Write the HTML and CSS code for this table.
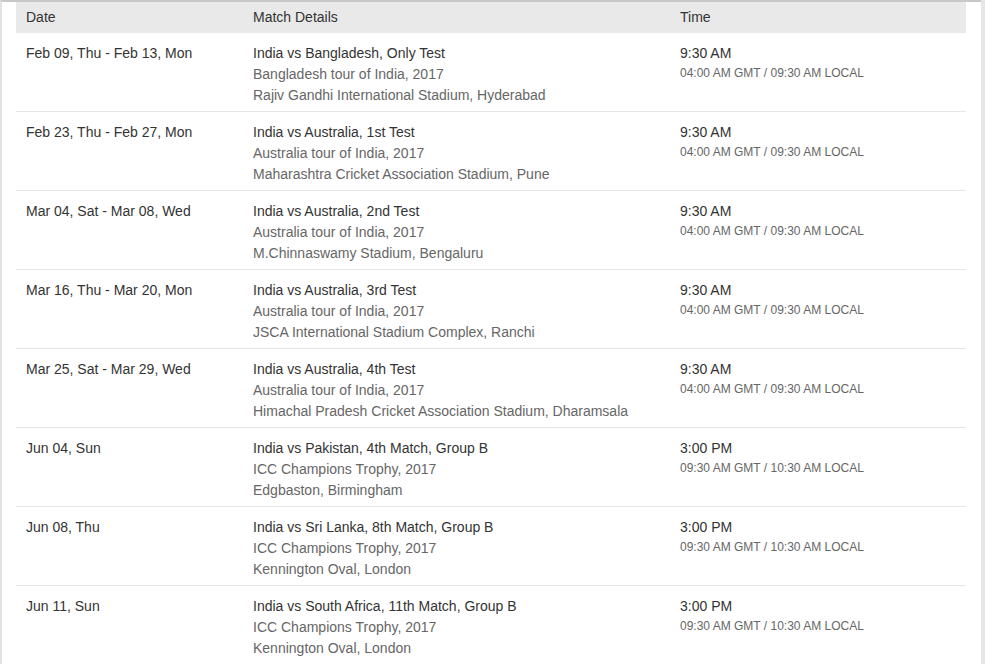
FILE: index.html
```html
<!DOCTYPE html>
<html>
<head>
<meta charset="utf-8">
<title>Fixtures</title>
<link rel="stylesheet" href="styles.css">
</head>
<body>
<div class="page">
  <div class="panel">
    <table class="fixtures">
      <thead>
        <tr><th class="c-date">Date</th><th class="c-match">Match Details</th><th class="c-time">Time</th></tr>
      </thead>
      <tbody>
        <tr>
          <td>Feb 09, Thu - Feb 13, Mon</td>
          <td><p class="title">India vs Bangladesh, Only Test</p><p class="sub">Bangladesh tour of India, 2017</p><p class="sub">Rajiv Gandhi International Stadium, Hyderabad</p></td>
          <td><p class="title">9:30 AM</p><p class="zone">04:00 AM GMT / 09:30 AM LOCAL</p></td>
        </tr>
        <tr>
          <td>Feb 23, Thu - Feb 27, Mon</td>
          <td><p class="title">India vs Australia, 1st Test</p><p class="sub">Australia tour of India, 2017</p><p class="sub">Maharashtra Cricket Association Stadium, Pune</p></td>
          <td><p class="title">9:30 AM</p><p class="zone">04:00 AM GMT / 09:30 AM LOCAL</p></td>
        </tr>
        <tr>
          <td>Mar 04, Sat - Mar 08, Wed</td>
          <td><p class="title">India vs Australia, 2nd Test</p><p class="sub">Australia tour of India, 2017</p><p class="sub">M.Chinnaswamy Stadium, Bengaluru</p></td>
          <td><p class="title">9:30 AM</p><p class="zone">04:00 AM GMT / 09:30 AM LOCAL</p></td>
        </tr>
        <tr>
          <td>Mar 16, Thu - Mar 20, Mon</td>
          <td><p class="title">India vs Australia, 3rd Test</p><p class="sub">Australia tour of India, 2017</p><p class="sub">JSCA International Stadium Complex, Ranchi</p></td>
          <td><p class="title">9:30 AM</p><p class="zone">04:00 AM GMT / 09:30 AM LOCAL</p></td>
        </tr>
        <tr>
          <td>Mar 25, Sat - Mar 29, Wed</td>
          <td><p class="title">India vs Australia, 4th Test</p><p class="sub">Australia tour of India, 2017</p><p class="sub">Himachal Pradesh Cricket Association Stadium, Dharamsala</p></td>
          <td><p class="title">9:30 AM</p><p class="zone">04:00 AM GMT / 09:30 AM LOCAL</p></td>
        </tr>
        <tr>
          <td>Jun 04, Sun</td>
          <td><p class="title">India vs Pakistan, 4th Match, Group B</p><p class="sub">ICC Champions Trophy, 2017</p><p class="sub">Edgbaston, Birmingham</p></td>
          <td><p class="title">3:00 PM</p><p class="zone">09:30 AM GMT / 10:30 AM LOCAL</p></td>
        </tr>
        <tr>
          <td>Jun 08, Thu</td>
          <td><p class="title">India vs Sri Lanka, 8th Match, Group B</p><p class="sub">ICC Champions Trophy, 2017</p><p class="sub">Kennington Oval, London</p></td>
          <td><p class="title">3:00 PM</p><p class="zone">09:30 AM GMT / 10:30 AM LOCAL</p></td>
        </tr>
        <tr>
          <td>Jun 11, Sun</td>
          <td><p class="title">India vs South Africa, 11th Match, Group B</p><p class="sub">ICC Champions Trophy, 2017</p><p class="sub">Kennington Oval, London</p></td>
          <td><p class="title">3:00 PM</p><p class="zone">09:30 AM GMT / 10:30 AM LOCAL</p></td>
        </tr>
      </tbody>
    </table>
  </div>
  <div class="rail"></div>
</div>
</body>
</html>
```

FILE: styles.css
```css
*{margin:0;padding:0;box-sizing:border-box;}
html,body{height:100%;overflow:hidden;}
body{background:#fff;font-family:"Liberation Sans",Arial,sans-serif;font-size:14px;color:#333;}
.page{display:flex;height:100%;}
.panel{flex:1;border-left:2px solid #e2e2e2;border-top:2px solid #c8c8c8;padding:0 15px 0 14px;}
.rail{width:4px;background:#e6e6e6;}
.fixtures{width:950px;border-collapse:collapse;table-layout:fixed;}
.fixtures th{background:#e9e9e9;font-weight:normal;text-align:left;height:31px;padding:0 10px 1px;color:#333;line-height:30px;}
.c-date{width:227px;}
.c-match{width:427px;}
.c-time{width:296px;}
.fixtures td{vertical-align:top;padding:10px 10px 5px;line-height:21px;height:79px;border-bottom:1px solid #e6e6e6;}
.fixtures tbody tr:first-child td{height:78px;padding-top:10px;}
.title{color:#333;}
.sub{color:#666;}
.zone{color:#666;font-size:12px;line-height:19px;}
```
